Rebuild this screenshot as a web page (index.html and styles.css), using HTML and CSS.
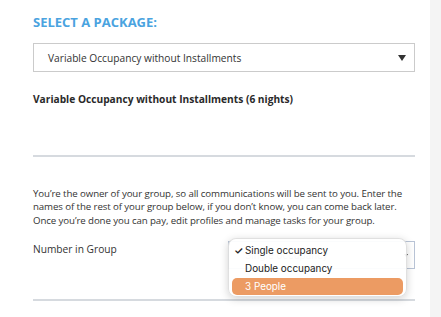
FILE: index.html
```html
<!DOCTYPE html>
<html>
<head>
<meta charset="utf-8">
<link rel="stylesheet" href="styles.css">
</head>
<body>
<div class="page">
  <div class="content">
    <h2 class="heading">SELECT A PACKAGE:</h2>
    <div class="select-box">
      <span class="select-text">Variable Occupancy without Installments</span>
      <span class="arrow"></span>
    </div>
    <div class="package-title">Variable Occupancy without Installments (6 nights)</div>
    <hr class="rule rule-top">
    <p class="intro">You’re the owner of your group, so all communications will be sent to you. Enter the names of the rest of your group below, if you don’t know, you can come back later. Once you’re done you can pay, edit profiles and manage tasks for your group.</p>
    <div class="group-row">
      <span class="group-label">Number in Group</span>
      <div class="group-select">
        <span class="group-select-text">Single occupancy</span>
        <span class="small-arrow"></span>
        <div class="menu">
          <div class="menu-item"><span class="check">✓</span>Single occupancy</div>
          <div class="menu-item">Double occupancy</div>
          <div class="menu-item active">3 People</div>
        </div>
      </div>
    </div>
    <hr class="rule rule-bottom">
  </div>
  <div class="strip"></div>
</div>
</body>
</html>
```
FILE: styles.css
```css
html, body {
  margin: 0;
  padding: 0;
  height: 100%;
}
body {
  font-family: "Open Sans", "Liberation Sans", sans-serif;
  color: #333;
  background: #fff;
  overflow: hidden;
}
.page {
  display: flex;
  height: 317px;
}
.content {
  width: 382px;
  padding: 0 15px 0 33px;
  background: #fff;
}
.strip {
  flex: 1;
  background: #f4f4f4;
}
.heading {
  margin: 0;
  padding-top: 12px;
  font-size: 13px;
  line-height: 20px;
  font-weight: 700;
  color: #4aa3df;
}
.select-box {
  margin-top: 11px;
  height: 27px;
  border: 1px solid #cbcbcb;
  display: flex;
  align-items: center;
  justify-content: space-between;
  padding: 0 8px 0 14px;
}
.select-text {
  font-size: 10.2px;
  color: #333;
}
.arrow {
  width: 0;
  height: 0;
  border-left: 4px solid transparent;
  border-right: 4px solid transparent;
  border-top: 6px solid #333;
}
.package-title {
  margin-top: 19px;
  font-size: 10.2px;
  font-weight: 700;
  line-height: 16px;
  color: #2a2a2a;
}
.rule {
  border: 0;
  height: 2px;
  background: #d6dadf;
  margin: 0;
}
.rule-top {
  margin-top: 48px;
}
.intro {
  margin: 30px 0 0;
  font-size: 9.7px;
  letter-spacing: -0.1px;
  line-height: 13.4px;
  color: #333;
}
.group-row {
  display: flex;
  justify-content: space-between;
  align-items: flex-start;
  margin-top: 14px;
}
.group-label {
  font-size: 10.2px;
  line-height: 16px;
}
.group-select {
  position: relative;
  width: 187px;
  height: 28px;
  margin-top: 0;
  border: 1px solid #b9c4d6;
  display: flex;
  align-items: center;
  justify-content: space-between;
  padding: 0 6px 0 16px;
  box-sizing: border-box;
}
.group-select-text {
  font-family: Inter, "Liberation Sans", sans-serif;
  font-size: 9.9px;
  color: #999;
}
.small-arrow {
  width: 0;
  height: 0;
  border-left: 2px solid transparent;
  border-right: 2px solid transparent;
  border-top: 3px solid #333;
}
.menu {
  position: absolute;
  left: -1px;
  top: -4px;
  width: 179px;
  height: 59px;
  box-sizing: border-box;
  padding: 3px 3px;
  background: rgba(255, 255, 255, 0.94);
  border: 0.5px solid rgba(0, 0, 0, 0.12);
  border-radius: 8px;
  box-shadow: 0 2px 8px rgba(0, 0, 0, 0.18);
  font-family: Inter, "Liberation Sans", sans-serif;
  font-size: 9.9px;
  color: #222;
}
.menu-item {
  height: 17.7px;
  line-height: 17.7px;
  padding-left: 13px;
  position: relative;
  border-radius: 5px;
}
.check {
  position: absolute;
  left: 2px;
  top: 0;
  font-size: 10.5px;
  font-weight: 600;
}
.menu-item.active {
  background: #ec9b63;
  color: #fff;
}
.rule-bottom {
  margin-top: 30px;
}
```
